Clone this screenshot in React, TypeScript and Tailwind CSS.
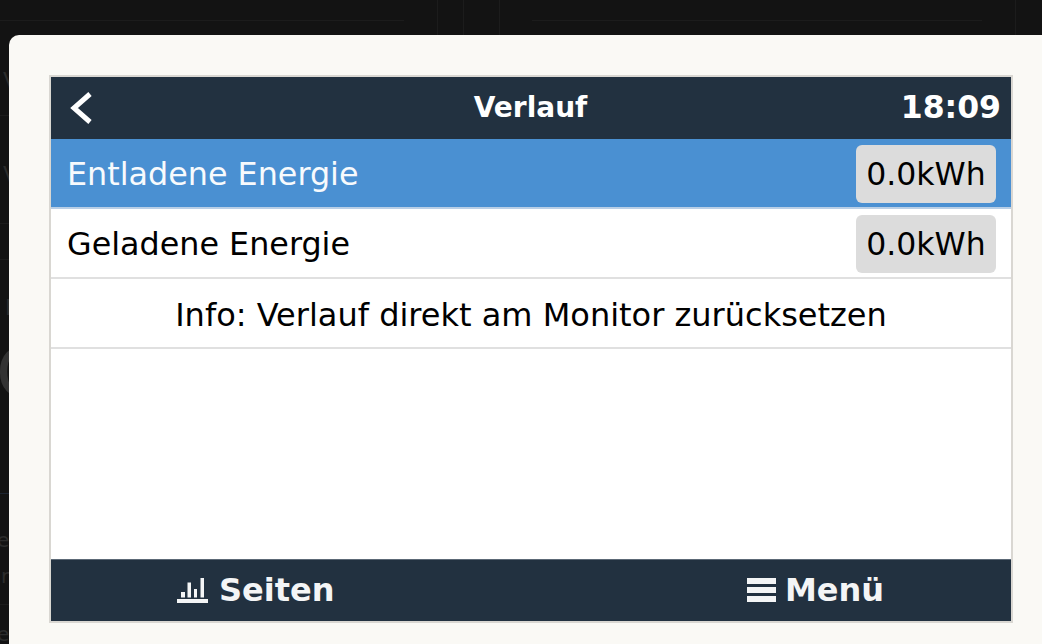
const font = "font-['DejaVu_Sans',sans-serif]";

function ChartIcon() {
  return (
    <svg width="31" height="25" viewBox="0 0 31 25" fill="#f4f5f6">
      <rect x="0" y="21" width="31" height="4" />
      <rect x="4" y="14" width="4" height="5.5" />
      <rect x="10.5" y="4.5" width="3.5" height="15" />
      <rect x="17" y="11" width="3" height="8.5" />
      <rect x="23.5" y="0" width="3.5" height="19.5" />
    </svg>
  );
}

function MenuIcon() {
  return (
    <svg width="29" height="24" viewBox="0 0 29 24" fill="#f4f5f6">
      <rect x="0" y="0" width="29" height="6" />
      <rect x="0" y="9" width="29" height="6" />
      <rect x="0" y="18" width="29" height="6" />
    </svg>
  );
}

function Row({ label, value, active }: { label: string; value: string; active?: boolean }) {
  return (
    <div
      className={`flex h-[70px] items-center justify-between border-b-2 pl-4 pr-[15px] pt-[2px] text-[31.8px] ${
        active ? "border-[#b9cfe6] bg-[#4a90d2] text-[#f7fafd]" : "border-[#e0e0e0] bg-white text-black"
      }`}
    >
      <span>{label}</span>
      <span className="flex h-[58px] w-[140px] items-center justify-center rounded-md bg-[#dcdcdc] pt-px text-[31.5px] text-black">
        {value}
      </span>
    </div>
  );
}

// faint page behind the dialog, above it
function TopStrip() {
  return (
    <div className="flex h-[35px] shrink-0 pt-5">
      <div className="-mt-5 h-[35px] w-[438px] border-r border-[#1c1c1c] pt-5">
        <div className="h-px w-[404px] bg-[#1c1c1c]" />
      </div>
      <div className="-mt-5 h-[35px] w-[26px] border-r border-[#1c1c1c]" />
      <div className="-mt-5 h-[35px] w-9 border-r border-[#1c1c1c]" />
      <div className="-mt-5 h-[35px] w-[516px] border-r border-[#1c1c1c] pl-8 pt-5">
        <div className="h-px w-[450px] bg-[#1c1c1c]" />
      </div>
    </div>
  );
}

// faint page behind the dialog, left of it
function LeftStrip() {
  return (
    <div className="flex h-[609px] w-[9px] shrink-0 flex-col overflow-hidden text-[#2c2c2c]">
      <span className="ml-[3px] mt-[33px] text-[22px] leading-[26px]">V</span>
      <div className="mt-[21px] h-px shrink-0 bg-[#1c1c1c]" />
      <span className="ml-[3px] mt-[46px] text-[22px] leading-[26px]">V</span>
      <div className="mt-[35px] h-px shrink-0 bg-[#1c1c1c]" />
      <div className="mt-[35px] h-px shrink-0 bg-[#1c1c1c]" />
      <span className="ml-[5px] mt-[35px] text-[22px] leading-[26px]">E</span>
      <span className="-ml-[4px] mt-[19px] text-[70px] leading-[66px] text-[#333333]">C</span>
      <div className="mt-[87px] h-px shrink-0 bg-[#1c2430]" />
      <span className="-ml-[3px] mt-[34px] text-[20px] leading-[24px]">e</span>
      <span className="ml-px mt-3 text-[20px] leading-[24px]">r</span>
      <div className="mt-4 h-px shrink-0 bg-[#1c1c1c]" />
      <span className="-ml-[3px] mt-[17px] text-[20px] leading-[24px]">e</span>
    </div>
  );
}

export default function App() {
  return (
    <div className={`flex h-[644px] w-[1042px] flex-col overflow-hidden bg-[#131313] ${font}`}>
      <TopStrip />
      <div className="flex flex-1">
        <LeftStrip />
        <div className="h-[609px] w-[1033px] rounded-tl-[10px] bg-[#faf9f5] pl-10 pt-10">
          <div className="flex h-[548px] w-[964px] flex-col border-2 border-[#d9d7d2] bg-white">
            <div className="grid h-[62px] grid-cols-[1fr_auto_1fr] items-center bg-[#223140] px-[10px] text-white">
              <svg className="ml-2" width="24" height="32" viewBox="0 0 24 32" fill="none" stroke="#ffffff" strokeWidth="5">
                <path d="M21 2 L5 16 L21 30" />
              </svg>
              <span className="-ml-px text-[28px] font-bold">Verlauf</span>
              <span className="justify-self-end text-[31.5px] font-bold">18:09</span>
            </div>
            <Row label="Entladene Energie" value="0.0kWh" active />
            <Row label="Geladene Energie" value="0.0kWh" />
            <div className="flex h-[70px] items-center justify-center border-b-2 border-[#e0e0e0] pt-1 text-[32px] text-black">
              Info: Verlauf direkt am Monitor zurücksetzen
            </div>
            <div className="flex-1" />
            <div className="flex h-[62px] items-center justify-between border-t border-[#5c6976] bg-[#223140] pb-px pl-[126px] pr-[127px] text-[32px] font-bold text-[#f4f5f6]">
              <div className="flex items-center gap-[11px]">
                <ChartIcon />
                <span>Seiten</span>
              </div>
              <div className="flex items-center gap-[9px]">
                <MenuIcon />
                <span>Menü</span>
              </div>
            </div>
          </div>
        </div>
      </div>
    </div>
  );
}
